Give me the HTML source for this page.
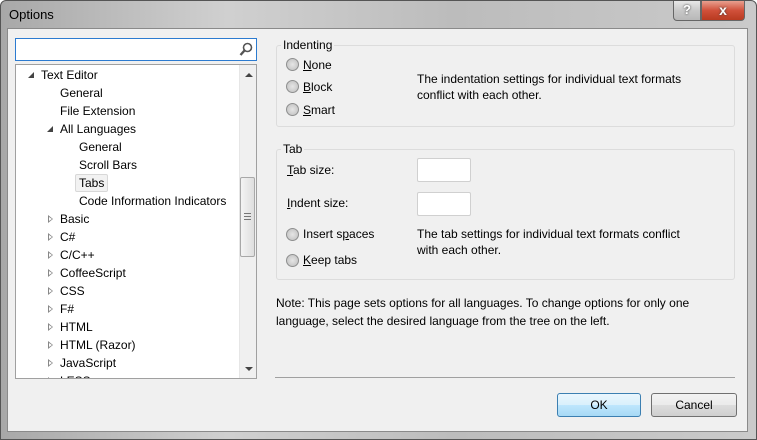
<!DOCTYPE html>
<html><head><style>
*{margin:0;padding:0;box-sizing:border-box}
body{width:757px;height:440px;overflow:hidden;font-family:"Liberation Sans",sans-serif;font-size:12px;color:#000;background:#fff}
.win{position:absolute;left:0;top:0;width:757px;height:440px;border:1px solid #555;border-radius:6px 6px 0 0;background:linear-gradient(90deg,#a8a8a8,#d0d0d0 30%,#bcbcbc 60%,#cacaca);}
.client{position:absolute;left:7px;top:28px;width:741px;height:404px;background:#f0f0f0;border:1px solid #8a8a8a}
.a{position:absolute;white-space:nowrap}
.title{left:8px;top:6px;font-size:13px;color:#000}
.btn{position:absolute;top:0;height:20px;border:1px solid #666;border-top:none}
.search{left:15px;top:38px;width:242px;height:23px;border:1px solid #2c7bd0;background:#fff}
.tree{left:15px;top:64px;width:242px;height:315px;border:1px solid #a0a0a0;background:#fff;overflow:hidden}
.row{position:absolute;height:18px;line-height:18px;white-space:nowrap}
.exp{position:absolute;width:0;height:0}
.open{border-left:6px solid transparent;border-bottom:6px solid #444}
.closed{border-top:4px solid transparent;border-bottom:4px solid transparent;border-left:5px solid #888}
.closed:after{content:"";position:absolute;left:-4px;top:-2px;border-top:2px solid transparent;border-bottom:2px solid transparent;border-left:3px solid #fff}
.grp{position:absolute;border:1px solid #dcdcdc;border-radius:3px}
.gt{position:absolute;background:#f0f0f0;padding:0 2px}
.radio{position:absolute;width:13px;height:13px;border-radius:50%;border:1px solid #8e8f8f;background:radial-gradient(circle at 50% 50%,#e6e6e6,#c9c9c9 70%,#f4f4f4)}
.tb{position:absolute;width:54px;height:24px;background:#fff;border:1px solid #d0d0d0;border-radius:2px}
.pb{position:absolute;height:24px;border-radius:3px;text-align:center;line-height:22px}
u{text-decoration:underline}
</style></head><body>
<div class="win">
 <div class="a title">Options</div>
 <div class="btn" style="left:672px;width:28px;border-radius:0 0 0 4px;background:linear-gradient(#e8e8e8,#c8c8c8 50%,#b8b8b8);text-align:center;font-weight:bold;color:#fff;font-size:13px;line-height:18px;text-shadow:0 0 2px #333">?</div>
 <div class="btn" style="left:700px;width:44px;border-radius:0 0 4px 0;background:linear-gradient(#e8a090,#d0503a 50%,#b83a20);text-align:center;font-weight:bold;color:#fff;font-size:14px;line-height:18px;text-shadow:0 0 2px #333">x</div>
</div>
<div class="client"></div>
<div class="a search"><svg style="position:absolute;right:3px;top:3px" width="14" height="15"><circle cx="8.5" cy="5.5" r="4" fill="none" stroke="#555" stroke-width="1.6"/><line x1="5.5" y1="8.5" x2="1.5" y2="13" stroke="#555" stroke-width="2.4"/></svg></div>
<div class="a tree">
 <div class="exp open" style="left:12px;top:7px"></div><div class="row" style="left:25px;top:1px">Text Editor</div>
 <div class="row" style="left:44px;top:19px">General</div>
 <div class="row" style="left:44px;top:37px">File Extension</div>
 <div class="exp open" style="left:31px;top:61px"></div><div class="row" style="left:44px;top:55px">All Languages</div>
 <div class="row" style="left:63px;top:73px">General</div>
 <div class="row" style="left:63px;top:91px">Scroll Bars</div>
 <div class="row" style="left:59px;top:109px;padding:0 3px;background:#f2f2f2;border:1px solid #d8d8d8;border-radius:2px;line-height:16px">Tabs</div>
 <div class="row" style="left:63px;top:127px">Code Information Indicators</div>
 <div class="exp closed" style="left:32px;top:150px"></div><div class="row" style="left:44px;top:145px">Basic</div>
 <div class="exp closed" style="left:32px;top:168px"></div><div class="row" style="left:44px;top:163px">C#</div>
 <div class="exp closed" style="left:32px;top:186px"></div><div class="row" style="left:44px;top:181px">C/C++</div>
 <div class="exp closed" style="left:32px;top:204px"></div><div class="row" style="left:44px;top:199px">CoffeeScript</div>
 <div class="exp closed" style="left:32px;top:222px"></div><div class="row" style="left:44px;top:217px">CSS</div>
 <div class="exp closed" style="left:32px;top:240px"></div><div class="row" style="left:44px;top:235px">F#</div>
 <div class="exp closed" style="left:32px;top:258px"></div><div class="row" style="left:44px;top:253px">HTML</div>
 <div class="exp closed" style="left:32px;top:276px"></div><div class="row" style="left:44px;top:271px">HTML (Razor)</div>
 <div class="exp closed" style="left:32px;top:294px"></div><div class="row" style="left:44px;top:289px">JavaScript</div>
 <div class="exp closed" style="left:32px;top:312px"></div><div class="row" style="left:44px;top:307px">LESS</div>
 <div style="position:absolute;left:223px;top:0;width:17px;height:313px;background:#f0f0f0;border-left:1px solid #e6e6e6"></div>
 <div style="position:absolute;left:229px;top:8px;border-left:4px solid transparent;border-right:4px solid transparent;border-bottom:4px solid #444"></div>
 <div style="position:absolute;left:229px;top:302px;border-left:4px solid transparent;border-right:4px solid transparent;border-top:4px solid #444"></div>
 <div style="position:absolute;left:224px;top:112px;width:15px;height:80px;border:1px solid #a8a8a8;border-radius:2px;background:linear-gradient(90deg,#f4f4f4,#dedede)"></div>
 <div style="position:absolute;left:228px;top:148px;width:7px;height:7px;border-top:1px solid #777;border-bottom:1px solid #777"></div>
 <div style="position:absolute;left:228px;top:151px;width:7px;height:1px;background:#777"></div>
</div>

<div class="grp" style="left:276px;top:45px;width:459px;height:82px"></div>
<div class="a gt" style="left:281px;top:38px">Indenting</div>
<div class="radio" style="left:286px;top:58px"></div><div class="a" style="left:303px;top:58px"><u>N</u>one</div>
<div class="radio" style="left:286px;top:80px"></div><div class="a" style="left:303px;top:80px"><u>B</u>lock</div>
<div class="radio" style="left:286px;top:103px"></div><div class="a" style="left:303px;top:103px"><u>S</u>mart</div>
<div class="a" style="left:417px;top:71px;line-height:16px">The indentation settings for individual text formats<br>conflict with each other.</div>

<div class="grp" style="left:276px;top:149px;width:459px;height:131px"></div>
<div class="a gt" style="left:281px;top:142px">Tab</div>
<div class="a" style="left:287px;top:163px"><u>T</u>ab size:</div>
<div class="tb" style="left:417px;top:158px"></div>
<div class="a" style="left:287px;top:196px"><u>I</u>ndent size:</div>
<div class="tb" style="left:417px;top:192px"></div>
<div class="radio" style="left:286px;top:228px"></div><div class="a" style="left:303px;top:227px">Insert s<u>p</u>aces</div>
<div class="radio" style="left:286px;top:254px"></div><div class="a" style="left:303px;top:253px"><u>K</u>eep tabs</div>
<div class="a" style="left:417px;top:226px;line-height:16px">The tab settings for individual text formats conflict<br>with each other.</div>

<div class="a" style="left:276px;top:294px;line-height:18px">Note: This page sets options for all languages. To change options for only one<br>language, select the desired language from the tree on the left.</div>
<div class="a" style="left:275px;top:377px;width:460px;height:1px;background:#a0a0a0"></div>

<div class="pb" style="left:557px;top:393px;width:84px;border:1px solid #3c7fb1;background:linear-gradient(#eaf6fd,#d9f0fc 50%,#bee6fd 51%,#a7d9f5)">OK</div>
<div class="pb" style="left:651px;top:393px;width:86px;border:1px solid #707070;background:linear-gradient(#f2f2f2,#ebebeb 50%,#dddddd 51%,#cfcfcf)">Cancel</div>
</body></html>
